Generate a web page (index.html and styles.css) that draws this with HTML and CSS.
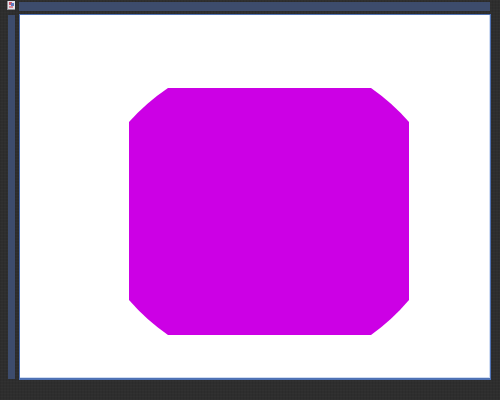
FILE: index.html
```html
<!DOCTYPE html>
<html lang="en">

<head>
    <meta charset="UTF-8">
    <title>Canvas</title>
    <link rel="stylesheet" href="styles.css">
</head>

<body>
    <div class="editor">
        <svg class="corner-icon" viewBox="0 0 8 9">
            <rect width="8" height="9" fill="#8f8f96" />
            <rect x="1" y="0" width="7" height="8" fill="#e4e4ea" />
            <rect x="2" y="1" width="3" height="3" fill="#d0566a" />
            <rect x="4" y="2" width="3" height="3" fill="#5f78c0" />
            <rect x="2" y="5" width="4" height="2" fill="#d98a98" />
        </svg>
        <div class="ruler-top"></div>
        <div class="ruler-left"></div>
        <div class="canvas">
            <!-- shape coordinates are relative to the white area -->
            <svg class="canvas-art" viewBox="0 0 470 363">
                <path fill="#cc00e5"
                    d="M109 107 A210 210 0 0 1 148 73 H351 A210 210 0 0 1 389 107 V285 A210 210 0 0 1 351 320 H148 A210 210 0 0 1 109 285 Z" />
            </svg>
        </div>
    </div>
</body>

</html>
```

FILE: styles.css
```css
html,
body {
    margin: 0;
    padding: 0;
    height: 100%;
}

body {
    background-color: #2e2e2e;
    background-image:
        linear-gradient(90deg, rgba(0, 0, 0, .06) 1px, transparent 1px),
        linear-gradient(rgba(255, 255, 255, .015) 1px, transparent 1px);
    background-size: 3px 3px;
}

.editor {
    display: grid;
    grid-template-columns: 7px 472px;
    grid-template-rows: 9px 366px;
    column-gap: 4px;
    row-gap: 3px;
    padding: 2px 0 0 8px;
}

.corner-icon {
    width: 8px;
    height: 9px;
    display: block;
    margin: -1px 0 0 -1px;
}

.ruler-top {
    background: #3d4c6c;
    width: 471px;
}

.ruler-left {
    background: #3d4c6c;
    height: 364px;
    margin-top: 1px;
}

.canvas {
    box-sizing: border-box;
    background: #ffffff;
    border: 1px solid #4f72b4;
    border-bottom-width: 2px;
    box-shadow: inset -1px -1px 0 #cfdcf2;
}

.canvas-art {
    display: block;
    width: 470px;
    height: 363px;
}
```
